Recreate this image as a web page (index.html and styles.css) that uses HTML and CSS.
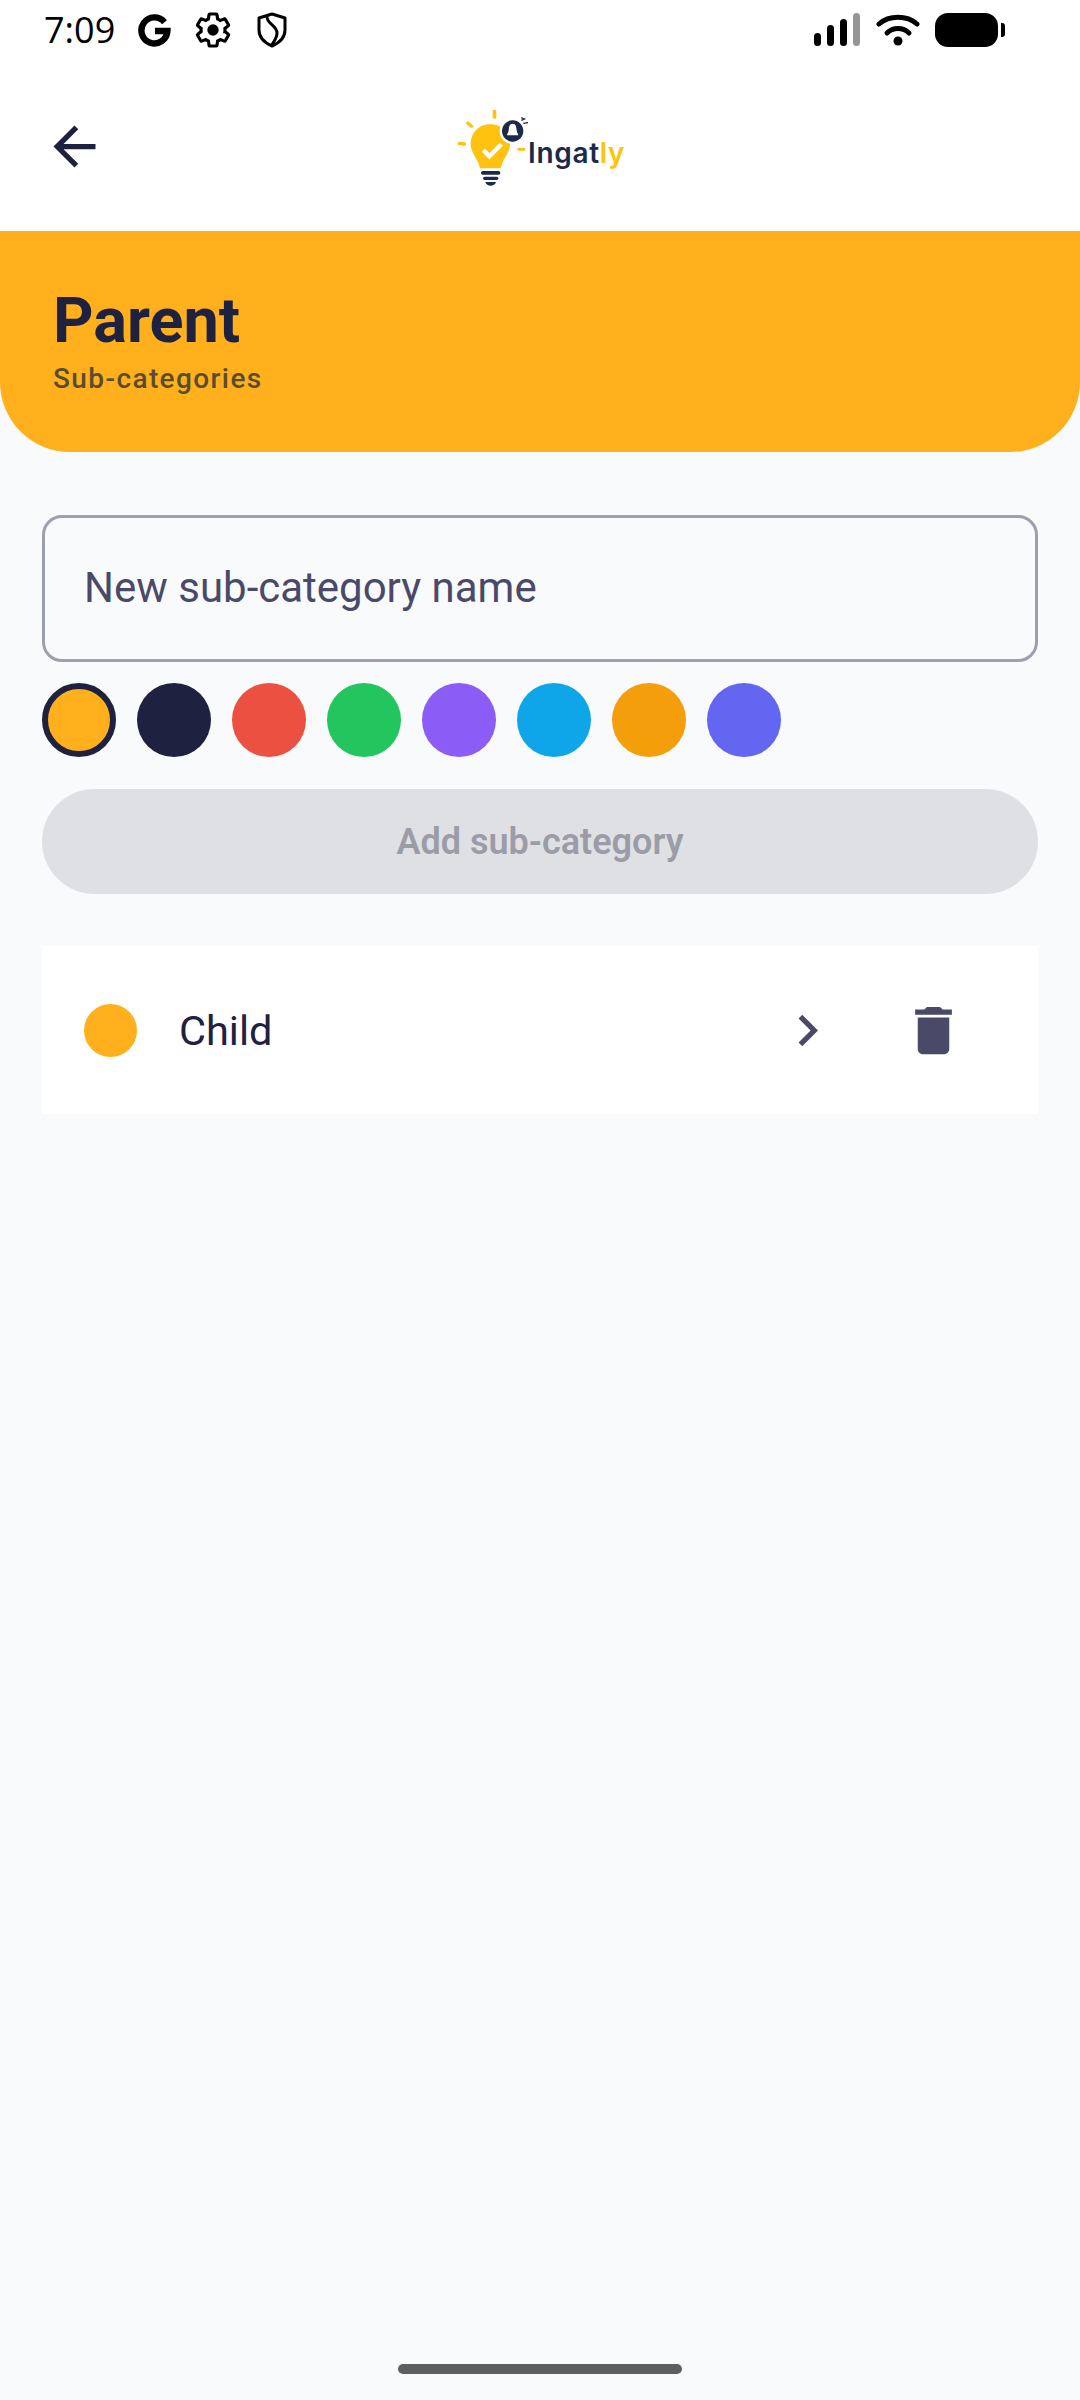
FILE: index.html
```html
<!DOCTYPE html>
<html lang="en">

<head>
    <meta charset="UTF-8">
    <meta name="viewport" content="width=device-width, initial-scale=1">
    <title>Ingatly - Sub-categories</title>
    <link rel="stylesheet" href="styles.css">
</head>

<body>

    <div class="top">
        <!-- Status bar -->
        <div class="status-bar">
            <span class="time">7:09</span>
            <svg class="status-icon icon-g" viewBox="0 0 33 33">
                <path d="M26.5 8.2A13 13 0 1 0 29.4 17H17" fill="none" stroke="#000" stroke-width="6.4" />
            </svg>
            <svg class="status-icon icon-gear" viewBox="0 0 24 24">
                <path d="M19.14 12.94c.04-.3.06-.61.06-.94 0-.32-.02-.64-.07-.94l2.03-1.58c.18-.14.23-.41.12-.61l-1.92-3.32c-.12-.22-.37-.29-.59-.22l-2.39.96c-.5-.38-1.03-.7-1.62-.94l-.36-2.54c-.04-.24-.24-.41-.48-.41h-3.84c-.24 0-.43.17-.47.41l-.36 2.54c-.59.24-1.13.57-1.62.94l-2.39-.96c-.22-.08-.47 0-.59.22L2.74 8.87c-.12.21-.08.47.12.61l2.03 1.58c-.05.3-.07.62-.07.94s.02.64.07.94l-2.03 1.58c-.18.14-.23.41-.12.61l1.92 3.32c.12.22.37.29.59.22l2.39-.96c.5.38 1.03.7 1.62.94l.36 2.54c.05.24.24.41.48.41h3.84c.24 0 .44-.17.47-.41l.36-2.54c.59-.24 1.13-.56 1.62-.94l2.39.96c.22.08.47 0 .59-.22l1.92-3.32c.12-.22.07-.47-.12-.61l-2.01-1.58z" fill="none" stroke="#000" stroke-width="1.9" />
                <circle cx="12" cy="12" r="3.4" fill="#000" />
            </svg>
            <svg class="status-icon icon-shield" viewBox="0 0 30 36">
                <path d="M15 2 L28 6 V18 C28 26 22 31 15 34 C8 31 2 26 2 18 V6 Z" fill="none" stroke="#000" stroke-width="3" stroke-linejoin="round" />
                <path d="M10 4 C9 12 20 13 20 21 C20 26 17 29 15 33" fill="none" stroke="#000" stroke-width="3" />
            </svg>
            <div class="status-right">
                <svg class="signal" viewBox="0 0 46 34">
                    <rect x="0" y="20" width="7" height="13" rx="3.5" fill="#000" />
                    <rect x="13" y="12" width="7" height="21" rx="3.5" fill="#000" />
                    <rect x="26" y="6" width="7" height="27" rx="3.5" fill="#000" />
                    <rect x="39" y="0" width="7" height="33" rx="3.5" fill="#959595" />
                </svg>
                <svg class="wifi" viewBox="0 0 44 34">
                    <path d="M3 11 C13 2 31 2 41 11" fill="none" stroke="#000" stroke-width="5" stroke-linecap="round" />
                    <path d="M11 20 C17 14 27 14 33 20" fill="none" stroke="#000" stroke-width="5" stroke-linecap="round" />
                    <circle cx="22" cy="28" r="4.5" fill="#000" />
                </svg>
                <div class="battery"></div>
                <div class="battery-tip"></div>
            </div>
        </div>

        <!-- Nav -->
        <div class="nav">
            <svg class="icon icon-dark" viewBox="0 0 24 24">
                <path d="M20 11H7.83l5.59-5.59L12 4l-8 8 8 8 1.41-1.41L7.83 13H20v-2z" />
            </svg>
            <svg class="logo" viewBox="0 0 660 330">
                <rect x="188" y="56" width="11" height="27" rx="4" fill="#ffc20e" />
                <rect x="107" y="96" width="24" height="10" rx="4" fill="#ffc20e" transform="rotate(38 119 101)" />
                <rect x="83" y="153" width="25" height="10" rx="4" fill="#ffc20e" transform="rotate(6 95 158)" />
                <rect x="262" y="170" width="24" height="9" rx="4" fill="#ffc20e" />
                <path d="M181 100 C144 100 122 128 122 160 C122 186 142 198 150 232 H212 C220 198 240 186 240 160 C240 128 218 100 181 100 Z" fill="#ffc20e" />
                <path d="M160 177 L178 196 L214 160" fill="none" stroke="#fff" stroke-width="13" />
                <circle cx="248" cy="120" r="39" fill="#fff" />
                <circle cx="248" cy="120" r="32" fill="#1b2a4a" />
                <path d="M248 98 C238 98 237 108 236 118 C235 126 231 128 231 133 H265 C265 128 261 126 260 118 C259 108 258 98 248 98 Z" fill="#fff" />
                <path d="M274 88 L286 83 M280 97 L294 95 M274 80 L282 84" stroke="#1b2a4a" stroke-width="4" />
                <rect x="153" y="240" width="58" height="11" rx="5" fill="#1b2a4a" />
                <rect x="159" y="257" width="46" height="10" rx="5" fill="#1b2a4a" />
                <path d="M166 273 H198 C194 288 170 288 166 273 Z" fill="#1b2a4a" />
                <text x="294" y="217" class="logo-text">Ingat<tspan class="logo-accent">ly</tspan></text>
            </svg>
        </div>
    </div>

    <!-- Banner -->
    <div class="banner">
        <h1 class="banner-title">Parent</h1>
        <p class="banner-sub">Sub-categories</p>
    </div>

    <div class="page">
        <div class="input-box">New sub-category name</div>

        <div class="swatches">
            <div class="swatch swatch-amber selected"></div>
            <div class="swatch swatch-navy"></div>
            <div class="swatch swatch-red"></div>
            <div class="swatch swatch-green"></div>
            <div class="swatch swatch-purple"></div>
            <div class="swatch swatch-sky"></div>
            <div class="swatch swatch-orange"></div>
            <div class="swatch swatch-indigo"></div>
        </div>

        <button class="add-button">Add sub-category</button>

        <div class="row">
            <div class="row-dot"></div>
            <span class="row-name">Child</span>
            <svg class="icon icon-muted" viewBox="0 0 24 24">
                <path d="M10 6L8.59 7.41 13.17 12l-4.58 4.59L10 18l6-6z" />
            </svg>
            <svg class="icon icon-muted" viewBox="0 0 24 24">
                <path d="M6 19c0 1.1.9 2 2 2h8c1.1 0 2-.9 2-2V7H6v12zM19 4h-3.5l-1-1h-5l-1 1H5v2h14V4z" />
            </svg>
        </div>
    </div>

    <div class="home-bar"></div>

</body>

</html>
```
FILE: styles.css
```css
* {
    margin: 0;
    padding: 0;
    box-sizing: border-box;
}

body {
    width: 1080px;
    height: 2400px;
    background: #f9fafc;
    color: #1e2140;
    font-family: Roboto, sans-serif;
    overflow: hidden;
    position: relative;
}

.top {
    background: #ffffff;
    height: 231px;
}

.status-bar {
    display: flex;
    align-items: center;
    height: 60px;
    padding-left: 44px;
}

.time {
    font-family: "Open Sans", sans-serif;
    font-size: 36px;
    color: #000000;
    width: 94px;
    line-height: 60px;
}

.status-icon {
    display: block;
}

.icon-g {
    width: 33px;
    height: 33px;
}

.icon-gear {
    width: 40px;
    height: 40px;
    margin-left: 22px;
}

.icon-shield {
    width: 30px;
    height: 36px;
    margin-left: 24px;
}

.status-right {
    display: flex;
    align-items: center;
    margin-left: auto;
    padding-right: 75px;
}

.signal {
    width: 46px;
    height: 34px;
}

.wifi {
    width: 44px;
    height: 34px;
    margin-left: 16px;
}

.battery {
    width: 63px;
    height: 34px;
    background: #000000;
    border-radius: 13px;
    margin-left: 15px;
}

.battery-tip {
    width: 4px;
    height: 14px;
    background: #000000;
    border-radius: 0 3px 3px 0;
    margin-left: 3px;
}

.nav {
    display: flex;
    align-items: center;
    justify-content: center;
    position: relative;
    height: 171px;
}

.nav .icon {
    position: absolute;
    left: 43px;
    top: 55px;
}

.logo {
    width: 220px;
    height: 110px;
}

.logo-text {
    font-family: Inter, sans-serif;
    font-size: 84px;
    font-weight: 600;
    letter-spacing: 2px;
    fill: #1b2a4a;
}

.logo-accent {
    fill: #ffc20e;
}

.icon {
    width: 63px;
    height: 63px;
    flex-shrink: 0;
}

.icon-dark {
    fill: #1e2140;
}

.icon-muted {
    fill: #4a4a68;
}

.banner {
    background: #ffb01c;
    height: 221px;
    border-radius: 0 0 70px 70px;
    padding: 55px 53px 0;
}

.banner-title {
    font-size: 63px;
    font-weight: 700;
    line-height: 70px;
}

.banner-sub {
    font-size: 28px;
    font-weight: 500;
    letter-spacing: 1.4px;
    line-height: 40px;
    margin-top: 3px;
    color: #5a4c30;
}

.page {
    display: flex;
    flex-direction: column;
    padding: 63px 42px 0;
}

.input-box {
    height: 147px;
    border: 3px solid #9c9fae;
    border-radius: 20px;
    padding-left: 39px;
    font-size: 42px;
    line-height: 139px;
    color: #4a4a68;
}

.swatches {
    display: flex;
    gap: 21px;
    margin-top: 21px;
}

.swatch {
    width: 74px;
    height: 74px;
    border-radius: 50%;
}

.selected {
    border: 6px solid #1e2140;
}

.swatch-amber {
    background: #ffb01c;
}

.swatch-navy {
    background: #1e2140;
}

.swatch-red {
    background: #eb5040;
}

.swatch-green {
    background: #22c55e;
}

.swatch-purple {
    background: #8b5cf6;
}

.swatch-sky {
    background: #0ea5e9;
}

.swatch-orange {
    background: #f59e0b;
}

.swatch-indigo {
    background: #6366f1;
}

.add-button {
    height: 105px;
    margin-top: 32px;
    border: none;
    border-radius: 53px;
    background: #dfe0e4;
    color: #9b9ca8;
    font-family: Roboto, sans-serif;
    font-size: 36px;
    font-weight: 600;
}

.row {
    display: flex;
    align-items: center;
    height: 168px;
    margin-top: 52px;
    padding: 0 73px 0 42px;
    background: #ffffff;
}

.row-dot {
    width: 53px;
    height: 53px;
    border-radius: 50%;
    background: #ffb01c;
    margin-right: 42px;
}

.row-name {
    flex: 1;
    font-size: 41.5px;
}

.row .icon+.icon {
    margin-left: 63px;
}

.home-bar {
    position: absolute;
    left: 398px;
    bottom: 26px;
    width: 284px;
    height: 10px;
    border-radius: 5px;
    background: #5f5f5f;
}
```
